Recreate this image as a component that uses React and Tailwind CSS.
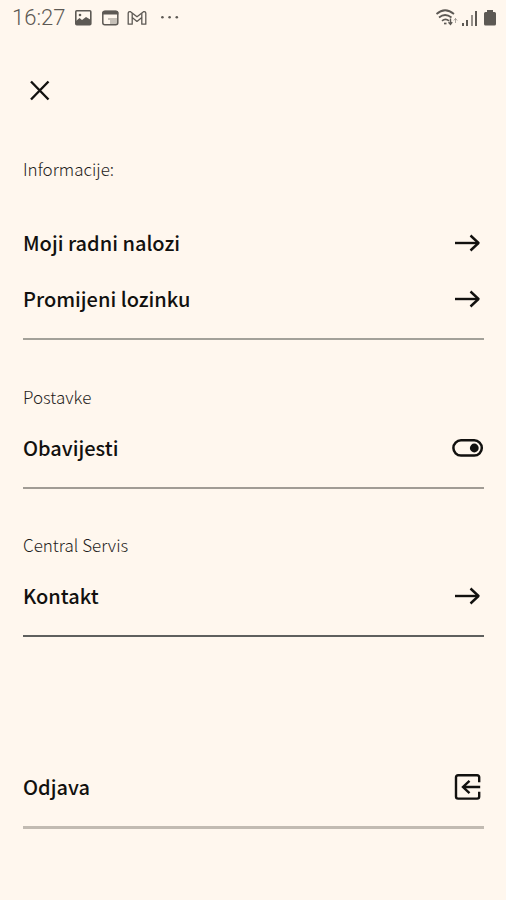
import React, { useState } from "react";

function ArrowIcon() {
  return (
    <svg className="h-8 w-8" viewBox="0 0 32 32" fill="none" stroke="currentColor" strokeWidth="2.4" aria-hidden="true">
      <path d="M3 16H26" />
      <path d="M18.5 8.5L26.5 16L18.5 23.5" strokeLinejoin="round" />
    </svg>
  );
}

function LogoutIcon() {
  return (
    <svg className="h-8 w-8" viewBox="0 0 32 32" fill="none" stroke="currentColor" strokeWidth="2.4" aria-hidden="true">
      <path d="M27.2 11.3V6.3Q27.2 4.2 25.1 4.2H6.1Q4 4.2 4 6.3V25.5Q4 27.6 6.1 27.6H25.1Q27.2 27.6 27.2 25.5V20.7" />
      <path d="M28.2 16H11.5M17.5 9.8L11 16L17.5 22.2" />
    </svg>
  );
}

function StatusBar() {
  return (
    <header className="flex h-9 items-center justify-between pl-3 pr-[9px] text-[#5d5954]">
      <div className="flex items-center">
        <span className="w-[62px] font-[Roboto,sans-serif] text-[22px] font-light leading-6">16:27</span>
        <svg className="h-[18px] w-[18px]" viewBox="0 0 18 18" aria-hidden="true">
          <rect x="1.8" y="1.8" width="15" height="14" rx="1" fill="none" stroke="currentColor" strokeWidth="1.6" />
          <path d="M2 12L5.5 9L8 11L12 8L17 11V16H2Z" fill="currentColor" />
          <circle cx="6" cy="6" r="1.3" fill="currentColor" />
        </svg>
        <svg className="ml-[9px] h-[18px] w-[18px]" viewBox="0 0 18 18" aria-hidden="true">
          <rect x="1.8" y="2.3" width="15" height="13.5" rx="2" fill="none" stroke="currentColor" strokeWidth="1.5" />
          <path d="M1.5 3.5Q2 1.8 4 1.8H15Q17 1.8 17.3 3.5V5.5H1.5Z" fill="currentColor" />
          <path d="M7 9H16V15H9V11H7Z" fill="currentColor" opacity="0.35" />
        </svg>
        <svg className="ml-2 h-[18px] w-5" viewBox="0 0 20 18" fill="none" stroke="currentColor" strokeWidth="1.3" strokeLinejoin="round" aria-hidden="true">
          <path d="M1.2 15.2V4.2Q1.5 2.3 3.5 2.7L10 7.8L16.5 2.7Q18.5 2.3 18.8 4.2V15.2H14.8V8.6L10 12.4L5.2 8.6V15.2Z" />
          <path d="M5.2 8.6V4.2M14.8 8.6V4.2" />
        </svg>
        <svg className="ml-[13px] h-[18px] w-5" viewBox="0 0 20 18" fill="currentColor" aria-hidden="true">
          <circle cx="2.4" cy="8.2" r="1.3" />
          <circle cx="9.6" cy="8.2" r="1.3" />
          <circle cx="16.8" cy="8.2" r="1.3" />
        </svg>
      </div>
      <div className="flex items-center">
        <svg className="h-5 w-6" viewBox="0 0 24 20" fill="none" stroke="currentColor" strokeWidth="1.7" aria-hidden="true">
          <path d="M1.5 6Q10 -1.5 19 6" />
          <path d="M4 9.5Q10 4.5 16.5 9.5" />
          <path d="M7 12.8Q10.5 9.8 14 12.8" />
          <path d="M9 15.5L11.5 15.5" />
          <path d="M15.5 10.5V16M13.5 14.2L15.5 16.5L17.2 14.2" strokeWidth="1.4" />
          <path d="M20.5 15V10.5M18.8 12.5L20.5 10.5L22.2 12.5" strokeWidth="1" opacity="0.5" />
        </svg>
        <svg className="ml-[3px] h-5 w-[17px]" viewBox="0 0 17 20" fill="currentColor" aria-hidden="true">
          <rect x="0" y="15" width="2" height="3" />
          <rect x="4" y="12" width="2" height="6" />
          <rect x="9" y="7" width="2" height="11" opacity="0.65" />
          <rect x="13" y="3" width="2" height="15" />
        </svg>
        <svg className="ml-1 h-5 w-[14px]" viewBox="0 0 14 20" fill="currentColor" aria-hidden="true">
          <path d="M4 2H10V4H11.5Q13 4 13 5.5V16Q13 17.5 11.5 17.5H2.5Q1 17.5 1 16V5.5Q1 4 2.5 4H4Z" />
        </svg>
      </div>
    </header>
  );
}

const rowClass = "flex h-14 w-full items-center justify-between text-left text-[20px] font-medium leading-8";

function LinkRow({ label }) {
  return (
    <a href="#" className={rowClass}>
      {label}
      <ArrowIcon />
    </a>
  );
}

function SectionLabel({ children }) {
  return <h2 className="text-[17px] font-light leading-6 text-[#1f1e1c]">{children}</h2>;
}

function App() {
  const [notifications, setNotifications] = useState(true);

  return (
    <div className="min-h-screen bg-[#fff7ee] font-['Noto_Sans_CJK_SC',sans-serif] text-[#12110f]">
      <StatusBar />
      <main className="pb-[72px] pl-[23px] pr-[22px] pt-9">
        <button type="button" aria-label="Zatvori" className="flex h-9 w-9 items-center justify-center">
          <svg className="h-6 w-6" viewBox="0 0 24 24" fill="none" stroke="currentColor" strokeWidth="2.4" aria-hidden="true">
            <path d="M2 3.5L19.5 21.5M19.5 3.5L2 21.5" />
          </svg>
        </button>

        <section className="mt-[49px] border-b-2 border-[#a3a199] pb-[11px]">
          <SectionLabel>Informacije:</SectionLabel>
          <div className="mt-[34px]">
            <LinkRow label="Moji radni nalozi" />
            <LinkRow label="Promijeni lozinku" />
          </div>
        </section>

        <section className="mt-[45px] border-b-2 border-[#a19c95] pb-[11px]">
          <SectionLabel>Postavke</SectionLabel>
          <label className={`${rowClass} mt-[11px] cursor-pointer`}>
            Obavijesti
            <input
              type="checkbox"
              role="switch"
              className="peer sr-only"
              checked={notifications}
              onChange={(e) => setNotifications(e.target.checked)}
            />
            <svg className="h-8 w-8" viewBox="0 0 32 32" aria-hidden="true">
              <rect x="1.4" y="8.3" width="28.4" height="15.2" rx="7.6" fill="none" stroke="currentColor" strokeWidth="2.5" />
              <circle cx={notifications ? 22.3 : 9} cy="16" r="4.4" fill="currentColor" />
            </svg>
          </label>
        </section>

        <section className="mt-11 border-b-2 border-[#5f605e] pb-[11px]">
          <SectionLabel>Central Servis</SectionLabel>
          <div className="mt-[11px]">
            <LinkRow label="Kontakt" />
          </div>
        </section>

        <div className="mt-[122px] border-b-3 border-[#c2bbb2] pb-[11px]">
          <button type="button" className={rowClass}>
            Odjava
            <LogoutIcon />
          </button>
        </div>
      </main>
    </div>
  );
}

export default App;
